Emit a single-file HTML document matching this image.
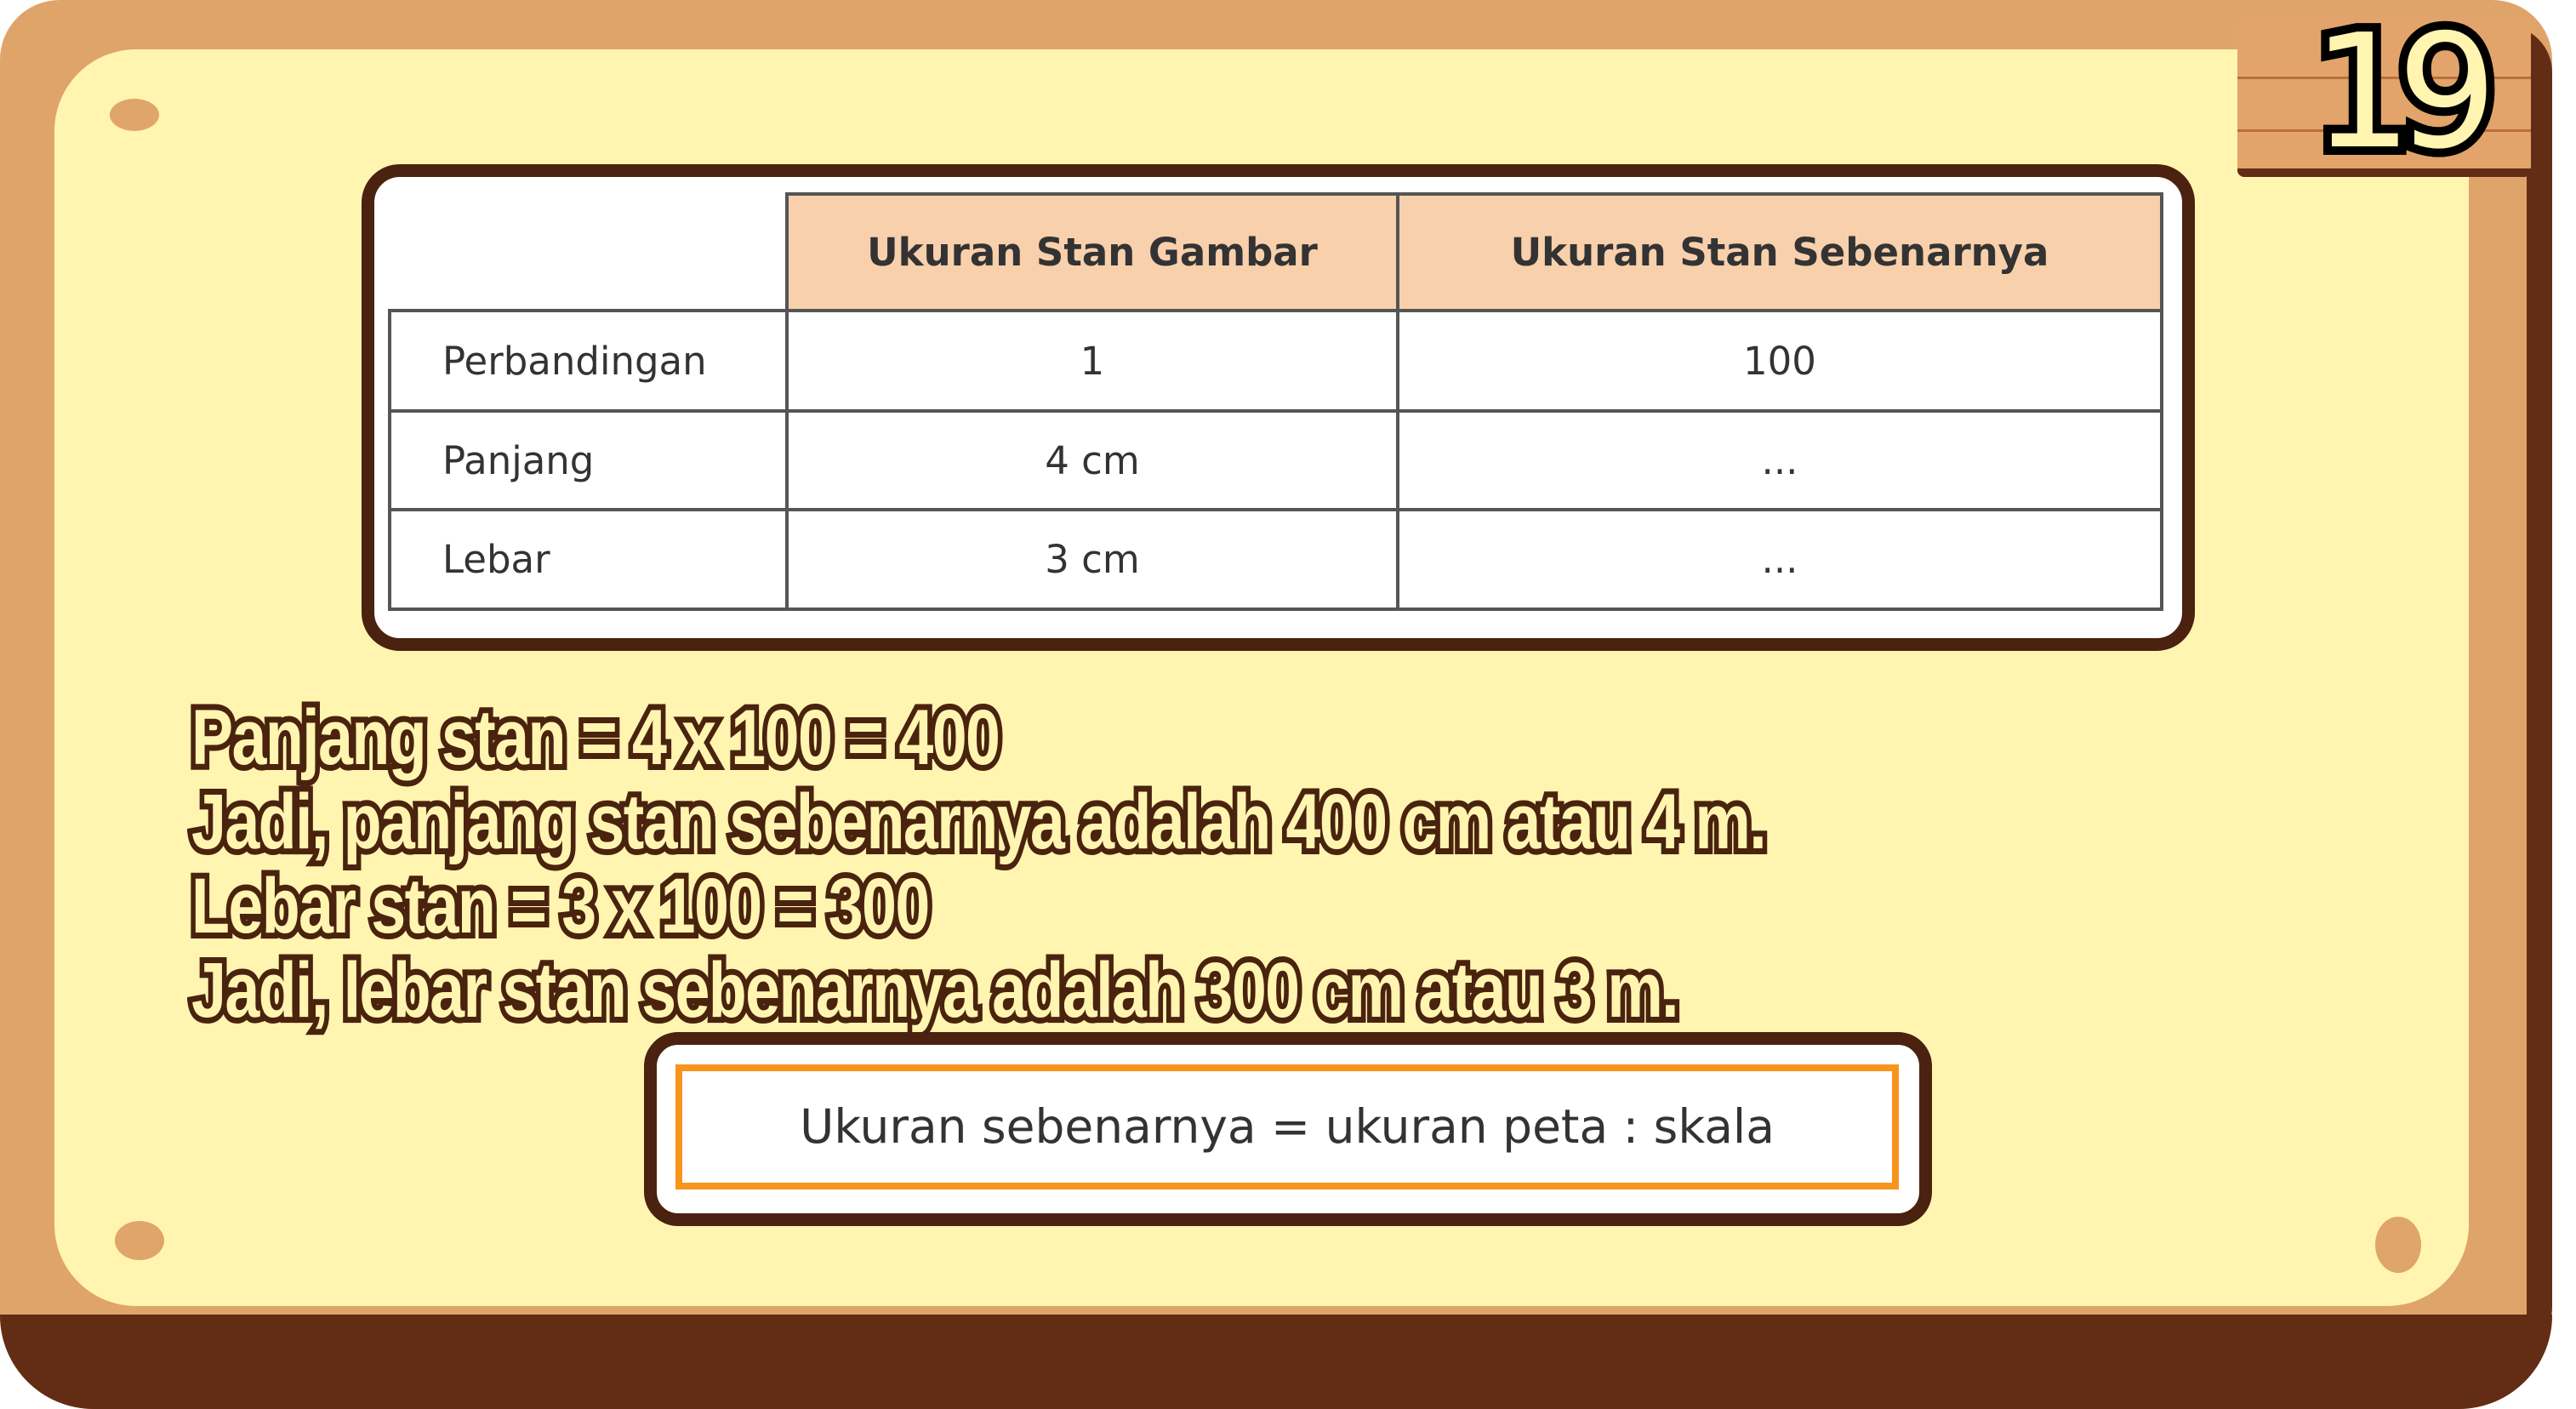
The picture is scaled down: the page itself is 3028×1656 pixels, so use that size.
<!DOCTYPE html>
<html><head><meta charset="utf-8"><style>
html,body{margin:0;padding:0;width:3028px;height:1656px;overflow:hidden;background:#fff;}
.abs{position:absolute;}
#board{left:0;top:0;width:3000px;height:1656px;background:#dfa46a;border-radius:70px 70px 110px 110px;}
#dark{left:0;top:1545px;width:3000px;height:111px;background:#622d14;border-radius:0 0 110px 110px;}
#darkr{left:2945px;top:30px;width:55px;height:1560px;background:#622d14;border-radius:0 60px 60px 0;}
#woodr{left:2900px;top:40px;width:70px;height:1510px;background:#dfa46a;}
#cream{left:64px;top:58px;width:2838px;height:1477px;background:#fff5b0;border-radius:96px 0 96px 96px;}
.dot{background:#e0a56a;border-radius:50%;}
#badge{left:2630px;top:20px;width:345px;height:188px;background:#e2a46a;border-radius:8px;border-bottom:10px solid #622d14;box-sizing:border-box;}
#badge .ln{position:absolute;left:0;width:100%;height:3px;background:#b8703a;}
#num{left:2718px;top:0px;font:185px "DejaVu Sans","Liberation Sans",sans-serif;color:#fff5b0;-webkit-text-stroke:20px #000;paint-order:stroke fill;letter-spacing:-18px;}
#tbox{left:425px;top:193px;width:2155px;height:572px;background:#fff;border:15px solid #4a220f;border-radius:45px;box-sizing:border-box;}
table{position:absolute;left:456px;top:226px;border-collapse:collapse;font-family:"DejaVu Sans","Liberation Sans",sans-serif;font-size:45px;color:#333;}
td{border:4px solid #555;padding:0;}
td.e{border:none;border-bottom:4px solid #555;}
.h{background:#f9d0ac;font-weight:bold;text-align:center;height:133px;}
.c{text-align:center;}
.l{padding-left:60px;}
#txt{left:225px;top:818px;font:bold 92px "Liberation Sans",sans-serif;color:#fff5b0;-webkit-text-stroke:14px #4a230e;paint-order:stroke fill;line-height:99px;transform:scaleX(0.8);transform-origin:0 0;white-space:nowrap;letter-spacing:-2px;}
#fbox{left:757px;top:1213px;width:1514px;height:228px;background:#fff;border:15px solid #4a220f;border-radius:40px;box-sizing:border-box;}
#forange{left:794px;top:1251px;width:1438px;height:147px;border:8px solid #f7941d;box-sizing:border-box;font:55px "DejaVu Sans",sans-serif;color:#333;text-align:center;line-height:131px;}
</style></head><body>
<div id="board" class="abs"></div>
<div id="darkr" class="abs"></div>
<div id="woodr" class="abs"></div>
<div id="dark" class="abs"></div>
<div id="cream" class="abs"></div>
<div class="abs dot" style="left:129px;top:116px;width:58px;height:38px"></div>
<div class="abs dot" style="left:135px;top:1435px;width:58px;height:46px"></div>
<div class="abs dot" style="left:2792px;top:1430px;width:54px;height:66px"></div>
<div id="badge" class="abs"><div class="ln" style="top:70px"></div><div class="ln" style="top:132px"></div></div>
<div id="num" class="abs">19</div>
<div id="tbox" class="abs"></div>
<table>
<tr><td class="e" style="width:465px"></td><td class="h" style="width:714px">Ukuran Stan Gambar</td><td class="h" style="width:894px">Ukuran Stan Sebenarnya</td></tr>
<tr style="height:118px"><td class="l">Perbandingan</td><td class="c">1</td><td class="c">100</td></tr>
<tr style="height:116px"><td class="l">Panjang</td><td class="c">4 cm</td><td class="c">...</td></tr>
<tr style="height:117px"><td class="l">Lebar</td><td class="c">3 cm</td><td class="c">...</td></tr>
</table>
<div id="txt" class="abs">Panjang stan = 4 x 100 = 400<br>Jadi, panjang stan sebenarnya adalah 400 cm atau 4 m.<br>Lebar stan = 3 x 100 = 300<br>Jadi, lebar stan sebenarnya adalah 300 cm atau 3 m.</div>
<div id="fbox" class="abs"></div>
<div id="forange" class="abs">Ukuran sebenarnya = ukuran peta : skala</div>
</body></html>
